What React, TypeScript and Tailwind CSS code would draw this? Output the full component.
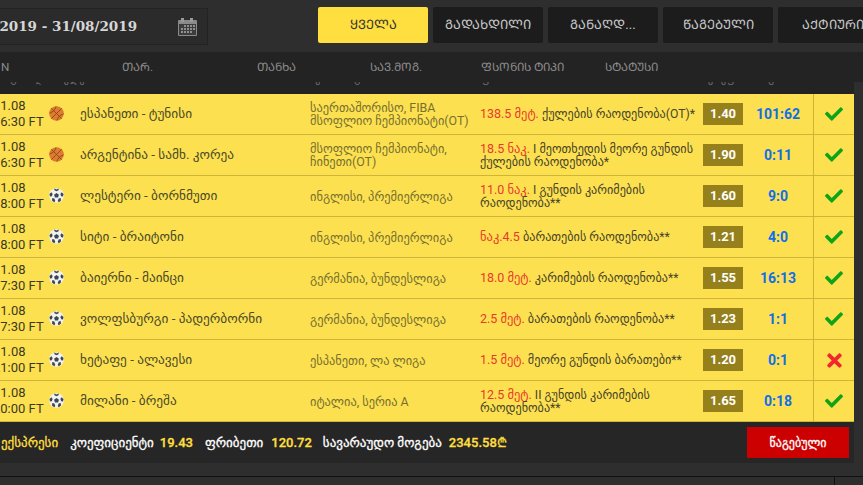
import { FaCheck, FaTimes } from "react-icons/fa";

const tabs = ["ᲧᲕᲔᲚᲐ", "ᲒᲐᲓᲐᲮᲓᲘᲚᲘ", "ᲒᲐᲜᲐᲦᲓ...", "ᲬᲐᲒᲔᲑᲣᲚᲘ", "ᲐᲥᲢᲘᲣᲠᲘ"];

const rows = [
  { time: "16:30 FT", sport: "b", name: "ესპანეთი - ტუნისი", league: "საერთაშორისო, FIBA მსოფლიო ჩემპიონატი(OT)", red: "138.5 მეტ.", bet: "ქულების რაოდენობა(OT)*", odd: "1.40", score: "101:62", ok: true },
  { time: "16:30 FT", sport: "b", name: "არგენტინა - სამხ. კორეა", league: "მსოფლიო ჩემპიონატი, ჩინეთი(OT)", red: "18.5 ნაკ.", bet: "I მეოთხედის მეორე გუნდის ქულების რაოდენობა*", odd: "1.90", score: "0:11", ok: true },
  { time: "18:00 FT", sport: "f", name: "ლესტერი - ბორნმუთი", league: "ინგლისი, პრემიერლიგა", red: "11.0 ნაკ.", bet: "I გუნდის კარიმების რაოდენობა**", odd: "1.60", score: "9:0", ok: true },
  { time: "18:00 FT", sport: "f", name: "სიტი - ბრაიტონი", league: "ინგლისი, პრემიერლიგა", red: "ნაკ.4.5", bet: "ბარათების რაოდენობა**", odd: "1.21", score: "4:0", ok: true },
  { time: "17:30 FT", sport: "f", name: "ბაიერნი - მაინცი", league: "გერმანია, ბუნდესლიგა", red: "18.0 მეტ.", bet: "კარიმების რაოდენობა**", odd: "1.55", score: "16:13", ok: true },
  { time: "17:30 FT", sport: "f", name: "ვოლფსბურგი - პადერბორნი", league: "გერმანია, ბუნდესლიგა", red: "2.5 მეტ.", bet: "ბარათების რაოდენობა**", odd: "1.23", score: "1:1", ok: true },
  { time: "21:00 FT", sport: "f", name: "ხეტაფე - ალავესი", league: "ესპანეთი, ლა ლიგა", red: "1.5 მეტ.", bet: "მეორე გუნდის ბარათები**", odd: "1.20", score: "0:1", ok: false },
  { time: "20:00 FT", sport: "f", name: "მილანი - ბრეშა", league: "იტალია, სერია A", red: "12.5 მეტ.", bet: "II გუნდის კარიმების რაოდენობა**", odd: "1.65", score: "0:18", ok: true },
];

function Basketball() {
  return (
    <svg width="15" height="15" viewBox="0 0 16 16">
      <circle cx="8" cy="8" r="7.8" fill="#df7a2e" />
      <g fill="none" stroke="#7d4a20" strokeWidth="0.9">
        <path d="M2.5 2.5l11 11M13.5 2.5l-11 11" />
        <path d="M7.5.5c-.5 3-3 6-7 7M15.5 8.5c-4 1-6.500 4-7 7" />
      </g>
    </svg>
  );
}

function Football() {
  return (
    <svg width="15" height="15" viewBox="0 0 16 16">
      <circle cx="8" cy="8" r="7.8" fill="#f2f2ee" />
      <g fill="#3c4656">
        <path d="M8 5.200l2.600 1.900-1 3H6.400l-1-3z" />
        <path d="M5.600.6L8 1.500l2.400-.9-.2 1.800L8 3.400 5.800 2.400z" />
        <path d="M.5 6.500l2.100-2.100 1.300 1.900-.9 2.400-1.900.4zM15.500 6.500l-2.100-2.100-1.300 1.900.9 2.400 1.900.4z" />
        <path d="M3.200 13.400l.3-2.800 2.200.6 1 2.600-1.200 1.400zM12.800 13.400l-.3-2.800-2.200.6-1 2.600 1.200 1.400z" />
      </g>
    </svg>
  );
}

function CalendarIcon() {
  return (
    <svg width="19" height="18" viewBox="0 0 19 18">
      <rect x="0" y="2" width="19" height="16" rx="1" fill="#8a8a8a" />
      <rect x="1" y="6" width="17" height="11" fill="#3d3d3d" />
      <rect x="3" y="0" width="3" height="4" fill="#9a9a9a" />
      <rect x="12" y="0" width="3" height="4" fill="#9a9a9a" />
      <g fill="#8f8f8f">
        <rect x="6" y="7" width="2" height="2" />
        <rect x="9" y="7" width="2" height="2" />
        <rect x="12" y="7" width="2" height="2" />
        <rect x="15" y="7" width="2" height="2" />
        <rect x="3" y="10" width="2" height="2" />
        <rect x="6" y="10" width="2" height="2" />
        <rect x="9" y="10" width="2" height="2" />
        <rect x="12" y="10" width="2" height="2" />
        <rect x="15" y="10" width="2" height="2" />
        <rect x="3" y="13" width="2" height="2" />
        <rect x="6" y="13" width="2" height="2" />
        <rect x="9" y="13" width="2" height="2" />
        <rect x="12" y="13" width="2" height="2" />
      </g>
    </svg>
  );
}

export default function App() {
  return (
    <div className="w-[863px] h-[485px] overflow-hidden bg-[#2e2e2e] text-[#d8d8d8]" style={{ fontFamily: "Roboto, 'DejaVu Sans', sans-serif" }}>
      <div className="h-[52px] flex pt-[7px]">
        <div className="-ml-[92px] w-[300px] shrink-0 h-[37px] mt-[1px] border border-[#232323] bg-[#2b2b2b] flex items-center justify-between pl-[43px] pr-[10px]">
          <span className="font-bold text-[#d6d6d6] text-[13.5px]" style={{ fontFamily: "'DejaVu Serif', serif" }}>01/07/2019 - 31/08/2019</span>
          <CalendarIcon />
        </div>
        <div className="ml-[110px] flex gap-[5px] shrink-0">
          {tabs.map((t, i) => (
            <div key={t} className={`w-[110px] h-[36px] shrink-0 rounded-[2px] flex items-center justify-center text-[13px] ${i === 0 ? "bg-[#ffdf3f] text-[#333]" : "bg-[#1c1c1c] text-[#c8c8c8]"}`}>
              {t}
            </div>
          ))}
        </div>
      </div>

      <div className="h-[30px] bg-[#232323] flex items-center text-[11.7px] text-[#8b8b8b] relative pt-[1px]">
        <span className="absolute left-[1px]">N</span>
        <span className="absolute left-[122px]">ᲗᲐᲠ.</span>
        <span className="absolute left-[257px]">ᲗᲐᲜᲮᲐ</span>
        <span className="absolute left-[370px]">ᲡᲐᲕ.ᲛᲝᲒ.</span>
        <span className="absolute left-[481px]">ᲤᲡᲝᲜᲘᲡ ᲢᲘᲞᲘ</span>
        <span className="absolute left-[605px]">ᲡᲢᲐᲢᲣᲡᲘ</span>
      </div>

      <div className="w-[854px]">
        <div className="h-[12px] bg-[#232323] overflow-hidden relative text-[10px] text-[#6f6f6f]">
          <span className="absolute left-[0px] -top-[11px]">მატჩის დასახელება</span>
          <span className="absolute left-[310px] -top-[11px]">ჩემპიონატი</span>
          <span className="absolute left-[481px] -top-[11px]">ფსონის</span>
          <span className="absolute left-[708px] -top-[11px]">კოეფი</span>
          <span className="absolute left-[758px] -top-[11px]">ანგარიში</span>
        </div>

        {rows.map((r) => (
          <div key={r.name} className="h-[41px] bg-[#fde050] border-b border-[#cdb53a] grid grid-cols-[48px_32px_230px_170px_223px_40px_70px_41px] items-center">
            <div className="-ml-[7px] text-[13px] leading-[16px] text-[#3a3a20] whitespace-nowrap">
              <div>31.08</div>
              <div>{r.time}</div>
            </div>
            <div className="flex -mt-[2px] pl-[1px]">{r.sport === "b" ? <Basketball /> : <Football />}</div>
            <div className="text-[13.3px] text-[#4a4a28]">{r.name}</div>
            <div className="text-[12.4px] leading-[13px] text-[#76702e] pr-1">{r.league}</div>
            <div className="text-[12.2px] leading-[13px] text-[#47442a] pr-1">
              <span className="text-[#e8392c] text-[12.5px]">{r.red}</span> {r.bet}
            </div>
            <div className="h-[22px] bg-[#96801b] text-white font-bold text-[13px] flex items-center justify-center">{r.odd}</div>
            <div className="text-center text-[#0f6fe8] font-bold text-[14px]">{r.score}</div>
            <div className="h-full border-l border-[#cdb53a] flex items-center justify-center">
              {r.ok ? <FaCheck className="text-[#0fa317] text-[18px]" /> : <FaTimes className="text-[#f0282d] text-[21px]" />}
            </div>
          </div>
        ))}

        <div className="h-[41px] bg-[#262626] flex items-center text-[13px] font-medium text-white [-webkit-text-stroke:0.3px]">
          <span className="ml-[1px] text-[#ffdf3f]">ექსპრესი</span>
          <span className="ml-[12px]">კოეფიციენტი</span>
          <span className="ml-[6px] text-[#ffdf3f]">19.43</span>
          <span className="ml-[12px]">ფრიბეთი</span>
          <span className="ml-[8px] text-[#ffdf3f]">120.72</span>
          <span className="ml-[11px]">სავარაუდო მოგება</span>
          <span className="ml-[7px] text-[#ffdf3f]">2345.58₾</span>
          <button className="ml-auto mr-[5px] w-[102px] h-[31px] bg-[#cc0000] text-white text-[12px]">წაგებული</button>
        </div>
      </div>
      <div className="h-[13px]" />
      <div className="h-[9px] border-t border-[#111] flex justify-end">
        <div className="w-[29px] border-l border-[#111]" />
      </div>
    </div>
  );
}
